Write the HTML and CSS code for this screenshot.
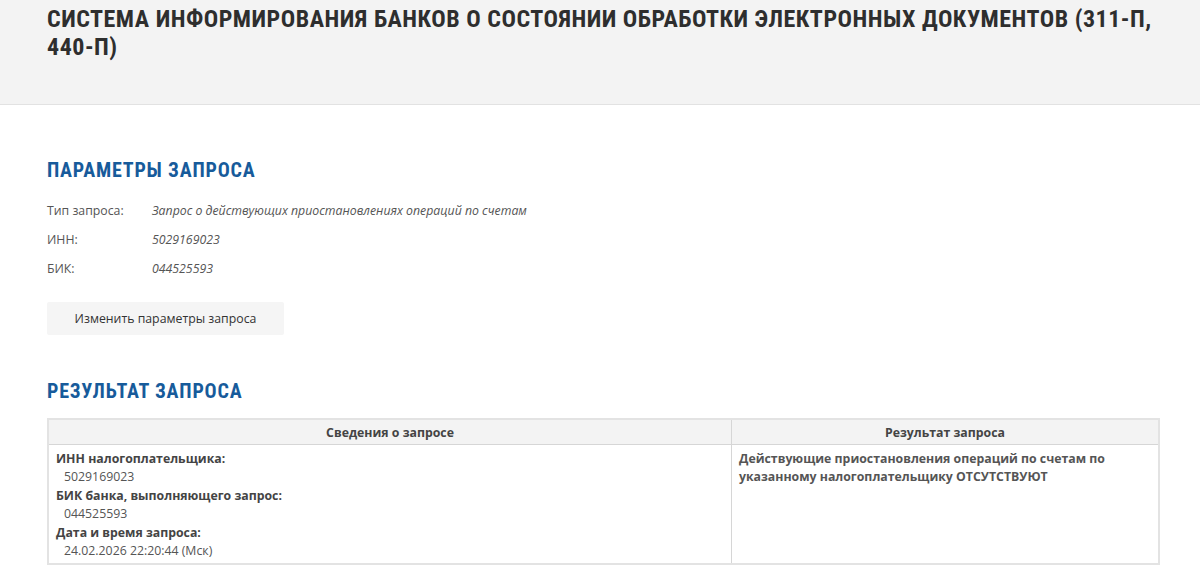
FILE: index.html
```html
<!DOCTYPE html>
<html lang="ru">
<head>
<meta charset="utf-8">
<title>Система информирования банков</title>
<link rel="stylesheet" href="styles.css">
</head>
<body>
<header class="top">
  <h1 class="title">СИСТЕМА ИНФОРМИРОВАНИЯ БАНКОВ О СОСТОЯНИИ ОБРАБОТКИ ЭЛЕКТРОННЫХ ДОКУМЕНТОВ (311-П, 440-П)</h1>
</header>
<main class="content">
  <h2 class="section">ПАРАМЕТРЫ ЗАПРОСА</h2>
  <div class="params">
    <div class="param"><span class="plabel">Тип запроса:</span><span class="pval">Запрос о действующих приостановлениях операций по счетам</span></div>
    <div class="param"><span class="plabel">ИНН:</span><span class="pval">5029169023</span></div>
    <div class="param"><span class="plabel">БИК:</span><span class="pval">044525593</span></div>
  </div>
  <button class="btn">Изменить параметры запроса</button>
  <h2 class="section section-result">РЕЗУЛЬТАТ ЗАПРОСА</h2>
  <table class="result">
    <thead>
      <tr><th class="col1">Сведения о запросе</th><th>Результат запроса</th></tr>
    </thead>
    <tbody>
      <tr>
        <td class="col1">
          <div class="ilabel">ИНН налогоплательщика:</div>
          <div class="ival">5029169023</div>
          <div class="ilabel">БИК банка, выполняющего запрос:</div>
          <div class="ival">044525593</div>
          <div class="ilabel">Дата и время запроса:</div>
          <div class="ival">24.02.2026 22:20:44 (Мск)</div>
        </td>
        <td class="res">Действующие приостановления операций по счетам по указанному налогоплательщику ОТСУТСТВУЮТ</td>
      </tr>
    </tbody>
  </table>
</main>
</body>
</html>
```
FILE: styles.css
```css
html, body {
  margin: 0;
  padding: 0;
  background: #fff;
}
body {
  font-family: "Open Sans", "Liberation Sans", sans-serif;
  font-size: 12.3px;
  color: #555;
}
.top {
  background: #f3f3f3;
  border-bottom: 1px solid #e2e2e2;
  height: 105px;
  box-sizing: border-box;
  padding: 5px 40px 0 47px;
}
.title {
  margin: 0;
  font-family: "Roboto Condensed", "DejaVu Sans Condensed", sans-serif;
  font-weight: bold;
  font-size: 24px;
  line-height: 28px;
  letter-spacing: 0.5px;
  color: #2e2e2e;
}
.content {
  padding: 0 40px 0 47px;
}
.section {
  margin: 53px 0 0;
  font-family: "Roboto Condensed", "DejaVu Sans Condensed", sans-serif;
  font-weight: bold;
  font-size: 20px;
  line-height: 24px;
  letter-spacing: 0.8px;
  color: #175b9b;
}
.params {
  margin-top: 14px;
}
.param {
  display: flex;
  height: 29px;
  align-items: center;
}
.plabel {
  width: 105px;
  flex: none;
}
.pval {
  font-style: italic;
}
.btn {
  display: block;
  margin-top: 19px;
  width: 237px;
  height: 33px;
  border: none;
  border-radius: 2px;
  background: #f5f5f5;
  font-family: "Open Sans", "Liberation Sans", sans-serif;
  font-size: 12.3px;
  color: #333;
  cursor: pointer;
}
.section-result {
  margin-top: 44px;
}
.result {
  margin-top: 15px;
  width: 1113px;
  border-collapse: collapse;
  border: 2px solid #e3e3e3;
}
.result th {
  background: #f3f3f3;
  font-weight: bold;
  color: #444;
  height: 24px;
  padding: 0;
  border: 1px solid #d6d6d6;
  font-size: 12.3px;
}
.result td {
  border: 1px solid #d6d6d6;
  vertical-align: top;
  padding: 5px 7px 3px;
  font-size: 12.3px;
  line-height: 18.4px;
  color: #555;
}
.result .col1 {
  width: 668px;
}
.ilabel {
  font-weight: bold;
  color: #444;
}
.ival {
  padding-left: 8px;
}
.res {
  font-weight: bold;
  color: #444;
}
```
